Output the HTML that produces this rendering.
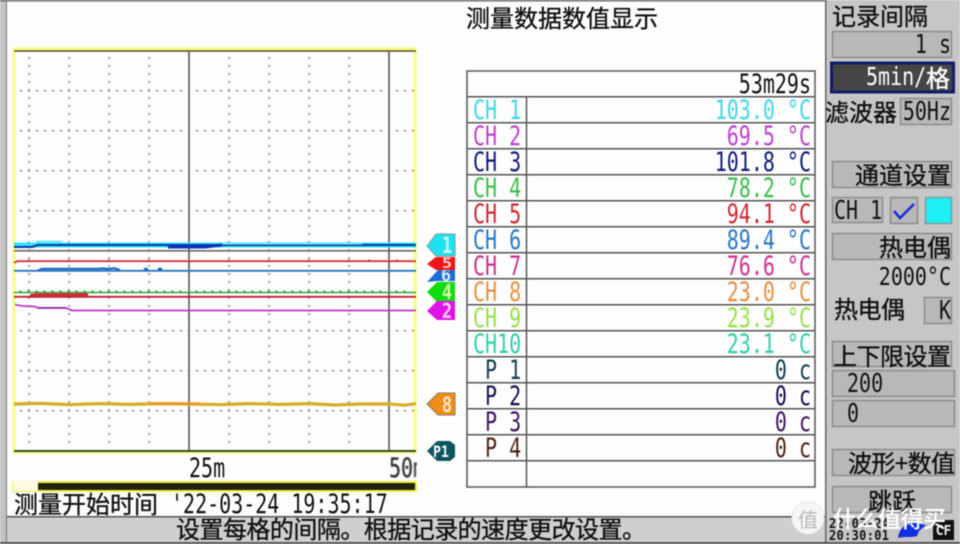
<!DOCTYPE html>
<html lang="zh"><head><meta charset="utf-8"><title>测量数据数值显示</title>
<style>
html,body{margin:0;padding:0;background:#fff;width:960px;height:544px;overflow:hidden}
svg{display:block;filter:blur(.45px)}
text{white-space:pre}
.m{font-family:"DejaVu Sans Mono","Liberation Mono",monospace;font-size:20px}
.c{font-family:"WenQuanYi Zen Hei","Noto Sans CJK SC","Liberation Sans",sans-serif;font-size:24px;fill:#111;stroke:#111;stroke-width:.35}
.e{text-anchor:end}
.b{fill:#b8b8b8;stroke:#8c8c8c;stroke-width:1.5}
.r{stroke:#555;stroke-width:1.5;fill:none}
.w{font-family:"DejaVu Sans Mono",monospace;font-weight:bold;font-size:17px;text-anchor:middle}
</style></head><body>
<svg width="960" height="544" viewBox="0 0 960 544" xmlns="http://www.w3.org/2000/svg">
<rect width="960" height="544" fill="#fdfdfe"/>
<rect x="0" y="0" width="7" height="544" fill="#c2c2c2"/>
<rect x="0" y="0" width="960" height="1.5" fill="#666"/>
<rect x="6" y="0" width="1" height="544" fill="#777"/>
<rect x="826" y="0" width="134" height="544" fill="#c6c6c6"/>
<rect x="825" y="0" width="1.5" height="544" fill="#666"/>
<rect x="7" y="517" width="818" height="25" fill="#cfcfcf"/>
<rect x="7" y="516" width="818" height="1.5" fill="#555"/>
<rect x="0" y="542" width="960" height="2" fill="#555"/>

<!-- plot frame -->
<rect x="14" y="49" width="401" height="403" fill="none" stroke="#fbfb90" stroke-width="3.5"/>
<line x1="14" y1="51" x2="416" y2="51" stroke="#55501a" stroke-width="1.5"/>
<line x1="14" y1="451" x2="416" y2="451" stroke="#2f4f10" stroke-width="2"/>

<!-- grid dots -->
<g stroke="#707070" stroke-width="1.6" stroke-dasharray="1.6 6.4">
<line x1="29" y1="57.2" x2="29" y2="444"/><line x1="69" y1="57.2" x2="69" y2="444"/><line x1="109" y1="57.2" x2="109" y2="444"/><line x1="149" y1="57.2" x2="149" y2="444"/>
<line x1="229" y1="57.2" x2="229" y2="444"/><line x1="269" y1="57.2" x2="269" y2="444"/><line x1="309" y1="57.2" x2="309" y2="444"/><line x1="349" y1="57.2" x2="349" y2="444"/>
<line x1="20.2" y1="90.7" x2="414" y2="90.7"/><line x1="20.2" y1="130.7" x2="414" y2="130.7"/><line x1="20.2" y1="170.7" x2="414" y2="170.7"/><line x1="20.2" y1="210.7" x2="414" y2="210.7"/>
<line x1="20.2" y1="330.7" x2="414" y2="330.7"/><line x1="20.2" y1="370.7" x2="414" y2="370.7"/><line x1="20.2" y1="410.7" x2="414" y2="410.7"/>
</g>
<g stroke="#fdfdfe" stroke-width="3">
<line x1="186" y1="90.7" x2="192" y2="90.7"/><line x1="186" y1="130.7" x2="192" y2="130.7"/><line x1="186" y1="170.7" x2="192" y2="170.7"/><line x1="186" y1="210.7" x2="192" y2="210.7"/>
<line x1="386" y1="90.7" x2="392" y2="90.7"/><line x1="386" y1="130.7" x2="392" y2="130.7"/><line x1="386" y1="170.7" x2="392" y2="170.7"/><line x1="386" y1="210.7" x2="392" y2="210.7"/>
</g>
<line x1="189" y1="51" x2="189" y2="450" stroke="#555" stroke-width="1.6"/>
<line x1="389" y1="51" x2="389" y2="450" stroke="#555" stroke-width="1.6"/>

<!-- traces -->
<rect x="14" y="242.5" width="402" height="5" fill="#2fe6f2"/>
<rect x="36" y="240.5" width="26" height="2" fill="#7fe8f4"/>
<path d="M14 247H32L38 245H416" stroke="#0a35b4" stroke-width="2" fill="none"/>
<path d="M168 247H205L222 245" stroke="#0a35b4" stroke-width="3" fill="none"/>
<rect x="222" y="243.5" width="140" height="1" fill="#9ff2f8"/>
<rect x="14" y="250" width="402" height="1.6" fill="#666"/>
<path d="M14 263L17 261.2H416" stroke="#d8333a" stroke-width="1.8" fill="none"/>
<path d="M29 259.5v1.5M69 259.5v1.5M109 259.5v1.5M149 259.5v1.5M229 259.5v1.5M269 259.5v1.5M309 259.5v1.5M349 259.5v1.5M369 259.5v1.5M397 259.5v1.5" stroke="#a03030" stroke-width="1.6"/>
<path d="M14 270.8H416" stroke="#2a78c4" stroke-width="1.8" fill="none"/>
<path d="M38 270.5L42 268.8H98L103 268.4L108 269L114 268.2L120 270M144 270L146 268.6L148 270M158 270L160 268.4L162 270" stroke="#1e6cc4" stroke-width="2.2" fill="none"/>
<path d="M14 292.5H416" stroke="#2ea838" stroke-width="1.6" fill="none"/>
<path d="M20.5 290.5v2M28.5 290.5v2M36.5 290.5v2M44.5 290.5v2M52.5 290.5v2M60.5 290.5v2M68.5 290.5v2M76.5 290.5v2M84.5 290.5v2M92.5 290.5v2M100.5 290.5v2M108.5 290.5v2M116.5 290.5v2M124.5 290.5v2M132.5 290.5v2M140.5 290.5v2M148.5 290.5v2M156.5 290.5v2M164.5 290.5v2M172.5 290.5v2M180.5 290.5v2M196.5 290.5v2M204.5 290.5v2M212.5 290.5v2M220.5 290.5v2M228.5 290.5v2M236.5 290.5v2M244.5 290.5v2M252.5 290.5v2M260.5 290.5v2M268.5 290.5v2M276.5 290.5v2M284.5 290.5v2M292.5 290.5v2M300.5 290.5v2M308.5 290.5v2M316.5 290.5v2M324.5 290.5v2M332.5 290.5v2M340.5 290.5v2M348.5 290.5v2M356.5 290.5v2M364.5 290.5v2M372.5 290.5v2M380.5 290.5v2M396.5 290.5v2M404.5 290.5v2" stroke="#2a9a34" stroke-width="2"/>
<path d="M14 296.8H416" stroke="#c01c34" stroke-width="1.8" fill="none"/>
<path d="M30 295.5L36 294.6H88" stroke="#d8202c" stroke-width="2.6" fill="none"/>
<path d="M15 304.5L22 306L35 306.5L38 308H66L72 310.5H416" stroke="#c234cc" stroke-width="1.8" fill="none"/>
<path d="M38 307.8H66" stroke="#7a2a90" stroke-width="1.4" fill="none"/>
<path d="M14 404L40 403.4L70 404.6L100 403.6L130 404.4L160 403.6L190 404L220 404.6L250 403.6L280 404.4L310 403.6L335 405L360 404L390 404L405 405.2L416 403.6" stroke="#d8ac28" stroke-width="3.2" fill="none"/>
<path d="M150 403.6H200" stroke="#ee9420" stroke-width="2.4" fill="none"/>

<!-- markers -->
<polygon points="427,282 438,270 455,270 455,281 438,281" fill="#1e6fd4"/>
<text class="w" x="446" y="281" style="fill:#d8e8ff;font-size:17px" transform="translate(0,0)">6</text>
<polygon points="427,246 436,234 455,234 455,256 436,256" fill="#1fe2ee" stroke="#7a9aa0" stroke-width="1"/>
<polygon points="427,264 436,257 455,257 455,270 436,270" fill="#f01414"/>
<polygon points="427,292 437,282 455,282 455,302 437,302" fill="#10dc10"/>
<polygon points="427,311 437,301 455,301 455,320 437,320" fill="#e014e4"/>
<polygon points="427,404 438,393 455,393 455,415 438,415" fill="#f08a18" stroke="#8c7a60" stroke-width="1"/>
<polygon points="427,451 437,441 450,441 455,445 455,457 450,461 437,461" fill="#0e5560"/>
<text class="w" style="fill:#c8fafa" transform="translate(447,253) scale(1,1.3)">1</text>
<text class="w" style="fill:#ffd0d0" transform="translate(447,268) scale(1,.85)">5</text>
<text class="w" style="fill:#d0ffa0" transform="translate(447,299) scale(1,1.2)">4</text>
<text class="w" style="fill:#ffd0ff" transform="translate(447,318) scale(1,1.2)">2</text>
<text class="w" style="fill:#ffe8c0" transform="translate(447,412) scale(1,1.25)">8</text>
<text class="w" style="fill:#fff;font-size:13px" transform="translate(441,457) scale(1,1.2)">P1</text>

<!-- axis -->
<text class="m" fill="#111" transform="translate(189,477) scale(1,1.35)">25m</text>
<svg x="389" y="455" width="28" height="26"><text class="m" fill="#111" transform="translate(0,22) scale(1,1.35)">50m</text></svg>
<rect x="13" y="482" width="403" height="9" fill="#232310" stroke="#f4f040" stroke-width="2"/>
<rect x="13" y="481" width="25" height="10" fill="#fdfbe0"/>

<!-- start time -->
<text class="c" x="14" y="513">测量开始时间</text>
<text class="m" fill="#111" transform="translate(171,513) scale(1,1.35)">'22-03-24 19:35:17</text>
<text class="c" x="176" y="538" textLength="470">设置每格的间隔。根据记录的速度更改设置。</text>

<!-- table -->
<text class="c" x="466" y="27">测量数据数值显示</text>
<g class="r">
<rect x="467" y="71" width="348" height="416"/>
<path d="M467 96.7H815M467 122.7H815M467 148.7H815M467 174.7H815M467 200.7H815M467 226.7H815M467 252.7H815M467 278.7H815M467 304.7H815M467 330.7H815M467 356.7H815M467 382.7H815M467 408.7H815M467 434.7H815M467 460.7H815M526.5 96.7V487"/>
</g>
<text class="m e" fill="#111" transform="translate(811,93) scale(1,1.35)">53m29s</text>
<g class="m">
<g fill="#3fd8e8"><text transform="translate(473,119) scale(1,1.35)">CH 1</text><text class="e" transform="translate(811,119) scale(1,1.35)">103.0 °C</text></g>
<g fill="#c040d0"><text transform="translate(473,145) scale(1,1.35)">CH 2</text><text class="e" transform="translate(811,145) scale(1,1.35)">69.5 °C</text></g>
<g fill="#101a80"><text transform="translate(473,171) scale(1,1.35)">CH 3</text><text class="e" transform="translate(811,171) scale(1,1.35)">101.8 °C</text></g>
<g fill="#38c048"><text transform="translate(473,197) scale(1,1.35)">CH 4</text><text class="e" transform="translate(811,197) scale(1,1.35)">78.2 °C</text></g>
<g fill="#d02830"><text transform="translate(473,223) scale(1,1.35)">CH 5</text><text class="e" transform="translate(811,223) scale(1,1.35)">94.1 °C</text></g>
<g fill="#2878c8"><text transform="translate(473,249) scale(1,1.35)">CH 6</text><text class="e" transform="translate(811,249) scale(1,1.35)">89.4 °C</text></g>
<g fill="#d03090"><text transform="translate(473,275) scale(1,1.35)">CH 7</text><text class="e" transform="translate(811,275) scale(1,1.35)">76.6 °C</text></g>
<g fill="#e89040"><text transform="translate(473,301) scale(1,1.35)">CH 8</text><text class="e" transform="translate(811,301) scale(1,1.35)">23.0 °C</text></g>
<g fill="#98e048"><text transform="translate(473,327) scale(1,1.35)">CH 9</text><text class="e" transform="translate(811,327) scale(1,1.35)">23.9 °C</text></g>
<g fill="#30d0a8"><text transform="translate(473,353) scale(1,1.35)">CH10</text><text class="e" transform="translate(811,353) scale(1,1.35)">23.1 °C</text></g>
<g fill="#104050"><text transform="translate(473,379) scale(1,1.35)"> P 1</text><text class="e" transform="translate(811,379) scale(1,1.35)">0 c</text></g>
<g fill="#101050"><text transform="translate(473,405) scale(1,1.35)"> P 2</text><text class="e" transform="translate(811,405) scale(1,1.35)">0 c</text></g>
<g fill="#401060"><text transform="translate(473,431) scale(1,1.35)"> P 3</text><text class="e" transform="translate(811,431) scale(1,1.35)">0 c</text></g>
<g fill="#502010"><text transform="translate(473,457) scale(1,1.35)"> P 4</text><text class="e" transform="translate(811,457) scale(1,1.35)">0 c</text></g>
</g>

<!-- right panel -->
<text class="c" x="832" y="25">记录间隔</text>
<rect class="b" x="832.5" y="31.5" width="119" height="26"/>
<text class="m e" fill="#111" transform="translate(951,53) scale(1,1.3)">1 s</text>
<rect x="831.5" y="63" width="122" height="29" fill="#454545" stroke="#101c6c" stroke-width="3"/>
<text class="m" fill="#fff" transform="translate(866,85) scale(1,1.25)">5min/</text><text class="c" x="926" y="87" style="fill:#fff;stroke:#fff;font-size:24px">格</text>
<text class="c" x="825" y="121">滤波器</text>
<rect class="b" x="900.5" y="98.5" width="51" height="26"/>
<text class="m e" fill="#111" transform="translate(951,120) scale(1,1.3)">50Hz</text>
<rect class="b" x="832.5" y="161.5" width="119" height="26"/>
<text class="c" x="855" y="184">通道设置</text>
<rect class="b" x="832.5" y="197.5" width="50" height="25"/>
<text class="m" fill="#111" transform="translate(834,219) scale(1,1.3)">CH 1</text>
<rect class="b" x="890.5" y="197.5" width="27" height="26"/>
<path d="M894 211L900 218L914 204" stroke="#1c2cd8" stroke-width="2.6" fill="none"/>
<rect x="925.5" y="197.5" width="26" height="26" fill="#1cf0f4" stroke="#7c9c9c" stroke-width="1.5"/>
<rect class="b" x="832.5" y="233.5" width="119" height="26"/>
<text class="c" x="879" y="256" textLength="72">热电偶</text>
<text class="m e" fill="#111" transform="translate(951,285) scale(1,1.25)">2000°C</text>
<text class="c" x="834" y="318" textLength="71">热电偶</text>
<rect class="b" x="924.5" y="297.5" width="27" height="26"/>
<text class="m e" fill="#111" transform="translate(951,319) scale(1,1.3)">K</text>
<rect class="b" x="832.5" y="341.5" width="119" height="25"/>
<text class="c" x="833" y="365" textLength="118">上下限设置</text>
<rect class="b" x="832.5" y="370.5" width="122" height="26"/>
<text class="m" fill="#111" transform="translate(847,392) scale(1,1.3)">200</text>
<rect class="b" x="832.5" y="400.5" width="122" height="26"/>
<text class="m" fill="#111" transform="translate(847,422) scale(1,1.3)">0</text>
<rect class="b" x="832.5" y="449.5" width="122" height="26"/>
<text class="c" x="848" y="472" textLength="107">波形+数值</text>
<rect class="b" x="832.5" y="486.5" width="119" height="26"/>
<text class="c" x="868" y="510">跳跃</text>

<!-- status clock -->
<text transform="translate(829,528) scale(1,1.1)" style="font-family:'DejaVu Sans Mono',monospace;font-weight:bold;font-size:12px" fill="#111" textLength="60">22-03-24</text>
<text transform="translate(829,540) scale(1,1.1)" style="font-family:'DejaVu Sans Mono',monospace;font-weight:bold;font-size:12px" fill="#111" textLength="60">20:30:01</text>
<path d="M898 538C899 530 903 526 907 525L914 521L920 524L926 525L919 531L917 536C911 538 905 536 898 538Z" fill="#1030e0"/>
<rect x="933" y="520" width="21" height="20" fill="#111"/>
<text x="943.5" y="535" text-anchor="middle" style="font-family:'DejaVu Sans Mono',monospace;font-weight:bold;font-size:13px" fill="#eee">CF</text>

<!-- watermark -->
<circle cx="808" cy="518" r="16" fill="#f6f6f6" stroke="#e4e4e4"/>
<text x="798" y="527" style="font-family:'WenQuanYi Zen Hei','Noto Sans CJK SC',sans-serif;font-size:20px" fill="#b8b8b8">值</text>
<text x="833" y="527" style="font-family:'Noto Sans CJK SC','WenQuanYi Zen Hei',sans-serif;font-size:23px;font-weight:500" fill="#fff" textLength="113">什么值得买</text>
</svg>
</body></html>
